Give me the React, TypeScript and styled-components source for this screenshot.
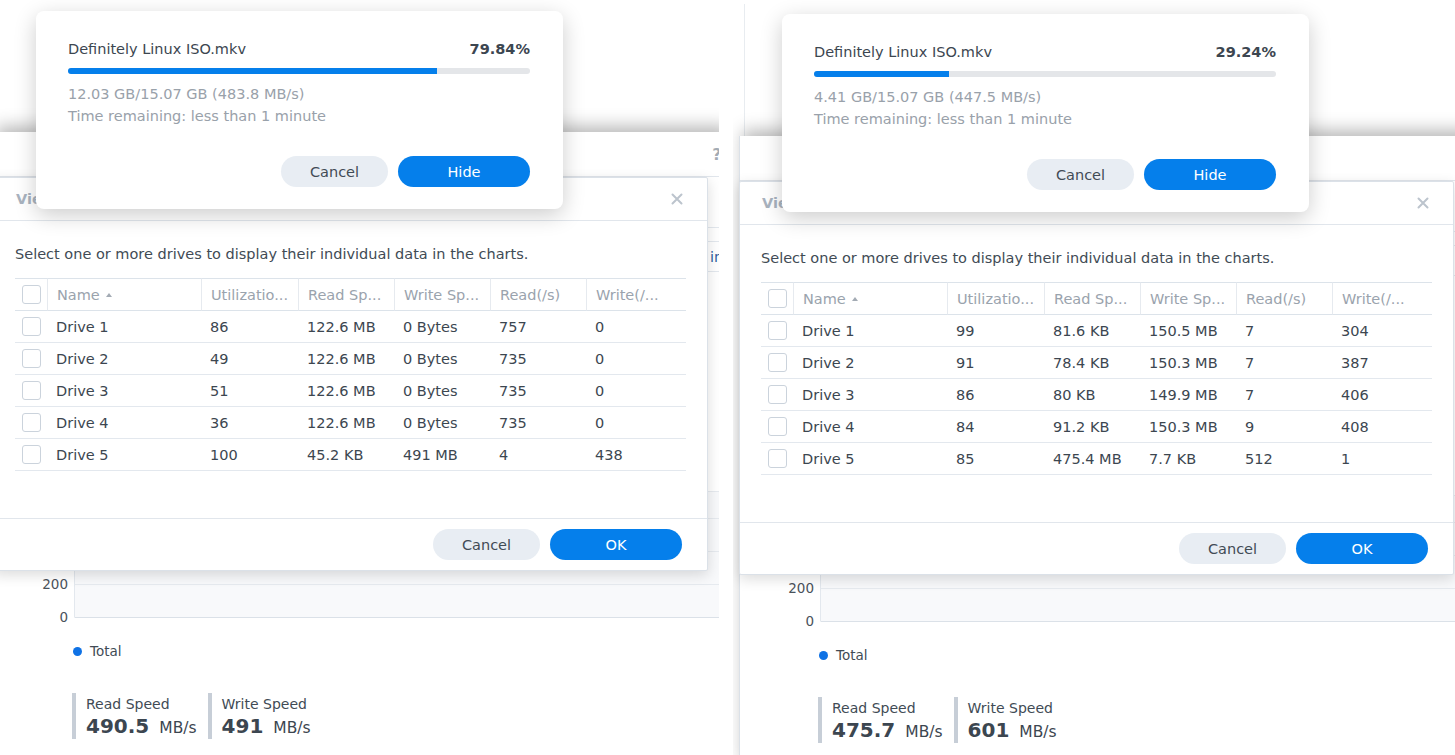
import React from 'react';
import styled, { createGlobalStyle } from 'styled-components';

type Drive = [string, string, string, string, string, string];

interface Snapshot {
  percent: number;
  transferred: string;
  drives: Drive[];
  readSpeed: string;
  writeSpeed: string;
}

const snapshots: { snap: Snapshot; width: number; dx: number; dy: number; popupTop: number }[] = [
  {
    width: 719,
    dx: -7,
    dy: 0,
    popupTop: 11,
    snap: {
      percent: 79.84,
      transferred: '12.03 GB/15.07 GB (483.8 MB/s)',
      drives: [
        ['Drive 1', '86', '122.6 MB', '0 Bytes', '757', '0'],
        ['Drive 2', '49', '122.6 MB', '0 Bytes', '735', '0'],
        ['Drive 3', '51', '122.6 MB', '0 Bytes', '735', '0'],
        ['Drive 4', '36', '122.6 MB', '0 Bytes', '735', '0'],
        ['Drive 5', '100', '45.2 KB', '491 MB', '4', '438'],
      ],
      readSpeed: '490.5',
      writeSpeed: '491',
    },
  },
  {
    width: 722,
    dx: 6,
    dy: 4,
    popupTop: 10,
    snap: {
      percent: 29.24,
      transferred: '4.41 GB/15.07 GB (447.5 MB/s)',
      drives: [
        ['Drive 1', '99', '81.6 KB', '150.5 MB', '7', '304'],
        ['Drive 2', '91', '78.4 KB', '150.3 MB', '7', '387'],
        ['Drive 3', '86', '80 KB', '149.9 MB', '7', '406'],
        ['Drive 4', '84', '91.2 KB', '150.3 MB', '9', '408'],
        ['Drive 5', '85', '475.4 MB', '7.7 KB', '512', '1'],
      ],
      readSpeed: '475.7',
      writeSpeed: '601',
    },
  },
];

const columns = ['Name', 'Utilizatio...', 'Read Sp...', 'Write Sp...', 'Read(/s)', 'Write(/...'];

const GlobalStyle = createGlobalStyle`
  html, body {
    margin: 0;
    padding: 0;
    background: #fff;
  }
  body {
    font-family: 'DejaVu Sans', Verdana, sans-serif;
    font-size: 14.5px;
    color: #3c4650;
  }
  * {
    box-sizing: border-box;
  }
`;

const Page = styled.div`
  display: flex;
  gap: 14px;
  width: 1455px;
  height: 755px;
  overflow: hidden;
`;

const Pane = styled.div<{ $width: number }>`
  position: relative;
  flex: none;
  width: ${(p) => p.$width}px;
  height: 755px;
  overflow: hidden;
`;

const Stage = styled.div<{ $dx: number; $dy: number }>`
  position: relative;
  width: 740px;
  margin-left: ${(p) => p.$dx}px;
  margin-top: ${(p) => p.$dy}px;
`;

const Backdrop = styled.div`
  height: 132px;
  margin-left: 5px;
  border-left: 1px solid #e8ecf0;
`;

/* window behind the dialogs */
const AppWindow = styled.div`
  height: 640px;
  background: #fff;
  border-left: 1px solid #dbe1e8;
  box-shadow: 0 -10px 16px -4px rgba(0, 0, 0, 0.28);
`;

const WinHeader = styled.div`
  height: 45px;
  display: flex;
  align-items: center;
  justify-content: flex-end;
  padding-right: 10px;
  border-bottom: 1px solid #e1e6ec;
`;

const HelpGlyph = styled.span`
  width: 12px;
  font-size: 16px;
  font-weight: 700;
  color: #a3abb4;
  text-align: center;
`;

const WinRow = styled.div<{ $h: number }>`
  height: ${(p) => p.$h}px;
  display: flex;
  align-items: center;
  padding-left: 716px;
  border-bottom: 1px solid #e3e8ee;
  color: #2f5f9e;
  white-space: nowrap;
`;

const ChartSvg = styled.svg`
  display: block;
  margin-top: 213px;
`;

const Legend = styled.div`
  display: flex;
  align-items: center;
  gap: 8px;
  margin-top: 16px;
  padding-left: 79px;
  line-height: 20px;
  font-size: 13.5px;
  color: #414b55;
`;

const Dot = styled.span`
  width: 9px;
  height: 9px;
  border-radius: 50%;
  background: #0f72e5;
`;

const Stats = styled.div`
  display: flex;
  gap: 11px;
  margin-top: 32px;
  padding-left: 78px;
`;

const Stat = styled.div`
  border-left: 4px solid #c7ced7;
  padding-left: 10px;
`;

const StatLabel = styled.div`
  line-height: 22px;
  font-size: 14px;
  color: #414b55;
`;

const StatValue = styled.div`
  line-height: 22px;
  font-size: 20px;
  font-weight: 700;
  color: #3c4650;
  white-space: nowrap;

  small {
    margin-left: 10px;
    font-size: 15.5px;
    font-weight: 400;
  }
`;

/* drive picker dialog */
const Dialog = styled.div`
  position: absolute;
  left: 0;
  top: 177px;
  width: 715px;
  background: #fff;
  border: 1px solid #dbe1e8;
  border-radius: 2px;
  box-shadow: 0 4px 14px rgba(0, 0, 0, 0.14);
`;

const DialogHeader = styled.div`
  height: 43px;
  display: flex;
  align-items: center;
  justify-content: space-between;
  padding: 0 24px 0 22px;
  border-bottom: 1px solid #e1e6ec;
`;

const DialogTitle = styled.span`
  font-weight: 700;
  color: #a9b3bf;
`;

const DialogBody = styled.div`
  padding: 23px 21px 47px;
`;

const Hint = styled.p`
  margin: 0 0 14px;
  line-height: 20px;
  color: #414b55;
`;

const Table = styled.div`
  display: grid;
  grid-template-columns: 32px 154px 97px 96px 96px 96px 100px;
  width: 671px;
`;

const HeadCell = styled.div<{ $first?: boolean }>`
  height: 33px;
  display: flex;
  align-items: center;
  justify-content: ${(p) => (p.$first ? 'center' : 'flex-start')};
  gap: 6px;
  padding-left: ${(p) => (p.$first ? 0 : 9)}px;
  border-top: 1px solid #dce3ea;
  border-bottom: 1px solid #dce3ea;
  border-left: ${(p) => (p.$first ? 'none' : '1px solid #e6eaef')};
  color: #9aa3ad;
  white-space: nowrap;
  overflow: hidden;
`;

const Cell = styled.div<{ $first?: boolean }>`
  height: 32px;
  display: flex;
  align-items: center;
  justify-content: ${(p) => (p.$first ? 'center' : 'flex-start')};
  padding-left: ${(p) => (p.$first ? 0 : 9)}px;
  border-bottom: 1px solid #e3e8ee;
  color: #3c4650;
  white-space: nowrap;
`;

const Check = styled.span`
  width: 19px;
  height: 19px;
  border: 1px solid #cbd3dc;
  border-radius: 3px;
  background: #fff;
`;

const SortCaret = styled.span`
  width: 0;
  height: 0;
  border-left: 3px solid transparent;
  border-right: 3px solid transparent;
  border-bottom: 4px solid #a3abb4;
`;

const DialogFooter = styled.div`
  display: flex;
  justify-content: flex-end;
  gap: 10px;
  padding: 10px 25px 10px;
  border-top: 1px solid #e1e6ec;
`;

const Button = styled.button<{ $primary?: boolean }>`
  width: ${(p) => (p.$primary ? 132 : 107)}px;
  height: 31px;
  border: none;
  border-radius: 16px;
  font-family: inherit;
  font-size: 14.5px;
  background: ${(p) => (p.$primary ? '#057feb' : '#e8edf3')};
  color: ${(p) => (p.$primary ? '#fff' : '#414b55')};
`;

/* upload progress popup */
const Popup = styled.div`
  position: absolute;
  left: 43px;
  width: 527px;
  padding: 28px 33px 22px 32px;
  background: #fff;
  border-radius: 8px;
  box-shadow: 0 6px 22px rgba(0, 0, 0, 0.2);
`;

const FileRow = styled.div`
  display: flex;
  justify-content: space-between;
  line-height: 20px;
  color: #3c4650;

  b {
    font-weight: 700;
  }
`;

const Track = styled.div`
  height: 6px;
  margin-top: 9px;
  border-radius: 3px;
  background: #e4e6e9;
  overflow: hidden;
`;

const Fill = styled.div`
  height: 100%;
  background: #057feb;
`;

const Info = styled.div`
  margin-top: 9px;
  line-height: 22px;
  color: #99a1aa;
`;

const PopupActions = styled.div`
  display: flex;
  justify-content: flex-end;
  gap: 10px;
  margin-top: 29px;
`;

function CloseIcon() {
  return (
    <svg width="12" height="12" viewBox="0 0 12 12">
      <path d="M1.5 1.5 10.5 10.5M10.5 1.5 1.5 10.5" stroke="#bcc4cd" strokeWidth="2" strokeLinecap="round" />
    </svg>
  );
}

function Chart() {
  const grid = [6.5, 33.5, 66.5, 99.5];
  return (
    <ChartSvg width="740" height="140" viewBox="0 0 740 140">
      <rect x="80.5" y="6" width="660" height="126" fill="#f8f9fb" />
      {grid.map((y) => (
        <line key={y} x1="80.5" x2="740" y1={y} y2={y} stroke="#e6eaef" />
      ))}
      <line x1="80.5" x2="80.5" y1="6" y2="132" stroke="#e3e8ee" />
      <line x1="80.5" x2="740" y1="132.5" y2="132.5" stroke="#dbe1e8" />
      <g fontFamily="DejaVu Sans, Verdana, sans-serif" fontSize="13.5" fill="#4a525b" textAnchor="end">
        <text x="74" y="38">600</text>
        <text x="74" y="71">400</text>
        <text x="74" y="104">200</text>
        <text x="74" y="137">0</text>
      </g>
    </ChartSvg>
  );
}

function Scene({ snap, dx, dy, popupTop }: { snap: Snapshot; dx: number; dy: number; popupTop: number }) {
  return (
    <Stage $dx={dx} $dy={dy}>
      <Backdrop />
      <AppWindow>
        <WinHeader>
          <HelpGlyph>?</HelpGlyph>
        </WinHeader>
        <WinRow $h={51} />
        <WinRow $h={14} />
        <WinRow $h={30}>info</WinRow>
        <Chart />
        <Legend>
          <Dot />
          Total
        </Legend>
        <Stats>
          <Stat>
            <StatLabel>Read Speed</StatLabel>
            <StatValue>
              {snap.readSpeed}
              <small>MB/s</small>
            </StatValue>
          </Stat>
          <Stat>
            <StatLabel>Write Speed</StatLabel>
            <StatValue>
              {snap.writeSpeed}
              <small>MB/s</small>
            </StatValue>
          </Stat>
        </Stats>
      </AppWindow>

      <Dialog>
        <DialogHeader>
          <DialogTitle>View Individual Drive Data</DialogTitle>
          <CloseIcon />
        </DialogHeader>
        <DialogBody>
          <Hint>Select one or more drives to display their individual data in the charts.</Hint>
          <Table>
            <HeadCell $first>
              <Check />
            </HeadCell>
            {columns.map((c, i) => (
              <HeadCell key={c}>
                {c}
                {i === 0 && <SortCaret />}
              </HeadCell>
            ))}
            {snap.drives.map((d) => (
              <React.Fragment key={d[0]}>
                <Cell $first>
                  <Check />
                </Cell>
                {d.map((v, i) => (
                  <Cell key={i}>{v}</Cell>
                ))}
              </React.Fragment>
            ))}
          </Table>
        </DialogBody>
        <DialogFooter>
          <Button>Cancel</Button>
          <Button $primary>OK</Button>
        </DialogFooter>
      </Dialog>

      <Popup style={{ top: popupTop }}>
        <FileRow>
          <span>Definitely Linux ISO.mkv</span>
          <b>{snap.percent.toFixed(2)}%</b>
        </FileRow>
        <Track>
          <Fill style={{ width: `${snap.percent}%` }} />
        </Track>
        <Info>
          {snap.transferred}
          <br />
          Time remaining: less than 1 minute
        </Info>
        <PopupActions>
          <Button>Cancel</Button>
          <Button $primary>Hide</Button>
        </PopupActions>
      </Popup>
    </Stage>
  );
}

export default function App() {
  return (
    <>
      <GlobalStyle />
      <Page>
        {snapshots.map((s, i) => (
          <Pane key={i} $width={s.width}>
            <Scene snap={s.snap} dx={s.dx} dy={s.dy} popupTop={s.popupTop} />
          </Pane>
        ))}
      </Page>
    </>
  );
}
